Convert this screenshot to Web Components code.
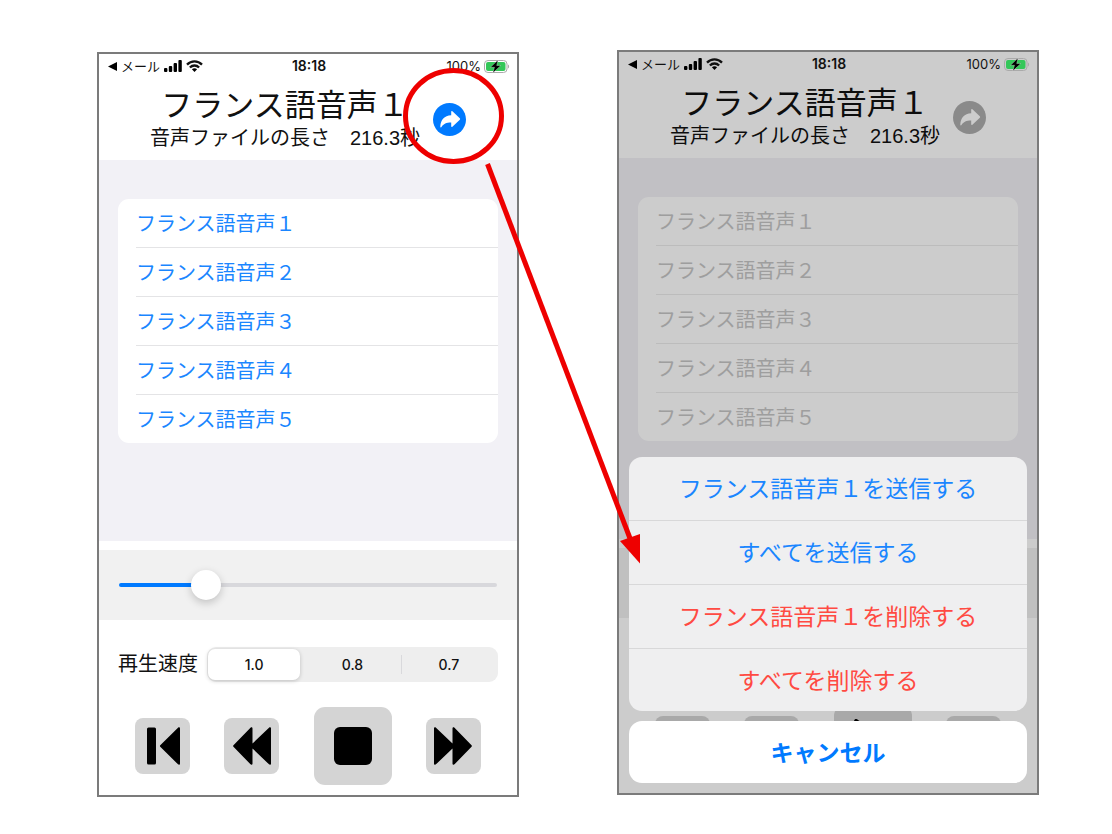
<!DOCTYPE html>
<html lang="ja">
<head>
<meta charset="utf-8">
<meta name="viewport" content="width=device-width, initial-scale=1">
<title>フランス語音声</title>
<style>
  body { margin: 0; background: #fff; font-family: Inter, "Noto Sans CJK JP", sans-serif; color: #111; }
</style>
</head>
<body>
<guide-figure>
  <phone-frame slot="before">
    <status-bar slot="status"></status-bar>
    <player-header></player-header>
    <track-list></track-list>
    <seek-bar></seek-bar>
    <speed-picker></speed-picker>
    <transport-controls></transport-controls>
  </phone-frame>
  <phone-frame slot="after" dimmed>
    <status-bar slot="status"></status-bar>
    <player-header></player-header>
    <track-list></track-list>
    <seek-bar></seek-bar>
    <speed-picker covered></speed-picker>
    <transport-controls paused></transport-controls>
    <action-sheet slot="sheet">
      <sheet-action>フランス語音声１を送信する</sheet-action>
      <sheet-action>すべてを送信する</sheet-action>
      <sheet-action kind="danger">フランス語音声１を削除する</sheet-action>
      <sheet-action kind="danger" last>すべてを削除する</sheet-action>
      <sheet-action slot="cancel" kind="cancel" last>キャンセル</sheet-action>
    </action-sheet>
  </phone-frame>
</guide-figure>

<script>
const define = (name, html) => customElements.define(name, class extends HTMLElement {
  constructor() {
    super();
    const t = document.createElement('template');
    t.innerHTML = '<style>*{box-sizing:border-box}button{font:inherit;color:inherit;border:0;background:none;padding:0;margin:0}svg{display:block}</style>' +
      (typeof html === 'function' ? html(this) : html);
    this.attachShadow({ mode: 'open' }).append(t.content.cloneNode(true));
  }
});

define('guide-figure', `
<style>
  :host { display: block; position: relative; }
  .pair { display: grid; grid-template-columns: 1fr 1fr; gap: 98px; padding: 50px 73px 37px 97px; align-items: start; }
  .first { padding-top: 2px; }
  .marks { position: absolute; z-index: 5; inset: 0; width: 100%; pointer-events: none; }
</style>
<div class="pair"><div class="first"><slot name="before"></slot></div><slot name="after"></slot></div>
<svg class="marks" viewBox="0 0 1112 834" aria-hidden="true">
  <ellipse cx="453.5" cy="116" rx="48" ry="45.5" fill="none" stroke="#ee0000" stroke-width="5"/>
  <path d="M487.5 164 631 541" stroke="#ee0000" stroke-width="5" fill="none"/>
  <path d="M640 563.5 620 541 640 534Z" fill="#ee0000"/>
</svg>`);

define('phone-frame', `
<style>
  :host { display: block; position: relative; border: 2px solid #7b7b7b; background: #fff;
    --accent: #007aff; --track-text: #1a86ff; --rule: #e4e4e6; }
  :host([dimmed]) { --accent: #adadad; --track-text: #c6c6c6; --rule: #ececec; }
  .status { position: relative; z-index: 2; }
  .shade { display: none; position: absolute; inset: 0; background: rgba(0,0,0,.2); }
  :host([dimmed]) .shade { display: block; }
</style>
<div class="status"><slot name="status"></slot></div>
<slot></slot>
<div class="shade"></div>
<slot name="sheet"></slot>`);

define('status-bar', `
<style>
  :host { display: grid; grid-template-columns: 1fr auto 1fr; align-items: center; height: 24px; padding: 0 7px 0 9px; font-size: 13px; line-height: 20px; }
  .left, .right { display: flex; align-items: center; }
  .left { gap: 4px; }
  .right { justify-content: flex-end; gap: 3px; }
  button { display: flex; align-items: center; gap: 4px; }
  time { font-size: 14px; font-weight: 600; }
</style>
<div class="left">
  <button type="button"><svg width="9" height="9" viewBox="0 0 9 9" aria-hidden="true"><path d="M0 4.5 9 0V9Z"/></svg>メール</button>
  <svg width="18" height="12" viewBox="0 0 18 12" aria-hidden="true"><rect y="8" width="3.4" height="4" rx="1"/><rect x="4.8" y="6" width="3.4" height="6" rx="1"/><rect x="9.6" y="3" width="3.4" height="9" rx="1"/><rect x="14.4" width="3.4" height="12" rx="1"/></svg>
  <svg width="17" height="12" viewBox="0 0 17 12" aria-hidden="true"><g fill="none" stroke="#111" stroke-width="2.3"><path d="M1 4.6C5.2.3 11.8.3 16 4.6"/><path d="M3.9 7.5c2.6-2.7 6.6-2.7 9.2 0"/></g><path d="M8.5 12 5.9 9.3c1.5-1.4 3.7-1.4 5.2 0Z"/></svg>
</div>
<time>18:18</time>
<div class="right">
  <span>100%</span>
  <svg width="26" height="13" viewBox="0 0 26 13" aria-hidden="true"><rect x=".5" y=".5" width="22.5" height="12" rx="3.5" fill="none" stroke="#aaa"/><rect x="2" y="2" width="19.5" height="9" rx="2" fill="#34c759"/><path d="M24 4.5c1.5.5 1.5 3.5 0 4Z" fill="#aaa"/><path d="M14 0 6.500 7.300h4L8.800 13 16.800 5.500h-4.100Z" stroke="#fff" stroke-opacity=".5" stroke-width=".6"/></svg>
</div>`);

define('player-header', `
<style>
  :host { display: flex; justify-content: center; align-items: center; gap: 13px; padding: 8px 8px 7px; }
  .text { text-align: center; white-space: nowrap; }
  h1 { margin: 0; font-size: 31px; line-height: 38px; font-weight: 400; }
  p { margin: 0; font-family: "Liberation Sans", "Noto Sans CJK JP", sans-serif; font-size: 20px; line-height: 29px; }
  button { width: 33px; height: 33px; }
</style>
<div class="text"><h1>フランス語音声１</h1><p>音声ファイルの長さ　216.3秒</p></div>
<button type="button" aria-label="共有"><svg width="33" height="33" viewBox="0 0 33 33"><circle cx="16.5" cy="16.5" r="16.5" style="fill:var(--accent)"/><path d="M18.2 8.7c0-.8.6-1 1.2-.5l7.4 7c.5.5.5 1 0 1.5l-7.4 7c-.6.5-1.200.2-1.200-.5v-3.600c-5 0-7.600 1.300-9.700 4.400-.5.7-1.300.4-1.200-.5.5-6.600 3.900-10.900 10.900-11.200Z" fill="#fff"/></svg></button>`);

define('track-list', `
<style>
  :host { display: block; background: #f2f1f6; padding: 39px 19px 98px; }
  ul { list-style: none; margin: 0; padding: 0 0 0 18px; background: #fff; border-radius: 11px; }
  li { border-bottom: 1px solid var(--rule); }
  li:last-child { border: 0; }
  button { display: block; width: 100%; height: 48px; padding-top: 2px; text-align: left; font-size: 20px; line-height: 46px; color: var(--track-text); font-weight: 400; }
</style>
<ul>${['１','２','３','４','５'].map(n => `<li><button type="button">フランス語音声${n}</button></li>`).join('')}</ul>`);

define('seek-bar', `
<style>
  :host { display: flex; align-items: center; height: 70px; margin-top: 9px; padding: 0 20px; background: #f1f1f1; }
  input { appearance: none; width: 100%; height: 30px; margin: 0; background: none; }
  input::-webkit-slider-runnable-track { height: 4px; border-radius: 2px; background: linear-gradient(to right, #007aff 23%, #d8d8dc 23%); }
  input::-webkit-slider-thumb { appearance: none; width: 30px; height: 30px; margin-top: -13px; border-radius: 50%; background: #fff; box-shadow: 0 3px 9px rgba(0,0,0,.2); }
</style>
<input type="range" min="0" max="216" value="45" aria-label="再生位置">`);

define('speed-picker', `
<style>
  :host { display: flex; align-items: center; gap: 9px; padding: 27px 19px 0; }
  :host([covered]) { visibility: hidden; }
  #name { font-size: 20px; line-height: 35px; white-space: nowrap; height: 35px; }
  .seg { flex: 1; display: grid; grid-template-columns: repeat(3, 1fr); height: 35px; padding: 2px 1px; background: #eeeeee; border-radius: 9px; }
  label { position: relative; display: flex; align-items: center; justify-content: center; font-size: 14px; font-weight: 500; border-radius: 7px; }
  label:nth-child(1) { background: #fff; box-shadow: 0 1px 4px rgba(0,0,0,.2); margin-right: 4px; }
  label:nth-child(3)::before { content: ""; position: absolute; left: 0; top: 6px; bottom: 6px; width: 1px; background: #d9d9dc; }
  input { appearance: none; position: absolute; inset: 0; margin: 0; }
</style>
<span id="name">再生速度</span>
<div class="seg" role="radiogroup" aria-labelledby="name">
  <label><input type="radio" name="speed" checked>1.0</label>
  <label><input type="radio" name="speed">0.8</label>
  <label><input type="radio" name="speed">0.7</label>
</div>`);

define('transport-controls', el => `
<style>
  :host { display: flex; align-items: center; justify-content: space-between; padding: 25px 36px 10px; }
  button { width: 55px; height: 56px; border-radius: 8px; background: #d4d4d4; display: grid; place-items: center; }
  .main { width: 78px; height: 78px; border-radius: 11px; }
</style>
<button type="button" aria-label="先頭へ"><svg width="34" height="38" viewBox="0 0 34 38"><rect x="1" y=".5" width="9" height="37" rx="1.500"/><path d="M32 .7c1-.9 2-.3 2 .8v35c0 1.100-1 1.700-2 .8L14.500 20c-.8-.7-.8-1.300 0-2Z"/></svg></button>
<button type="button" aria-label="巻き戻し"><svg width="38" height="38" viewBox="0 0 38 38"><path d="M17.500.7c1-.9 2-.3 2 .8v15L36 .7c1-.9 2-.3 2 .8v35c0 1.100-1 1.700-2 .8L19.500 21.500v15c0 1.100-1 1.700-2 .8L.700 20c-.8-.7-.8-1.300 0-2Z"/></svg></button>
<button type="button" class="main" aria-label="再生・停止">${el.hasAttribute('paused')
  ? '<svg width="38" height="50" viewBox="0 0 38 50"><path d="M0 3c0-3 2-4 4-2l33 22q2 2 0 4L4 49c-2 2-4 1-4-2Z"/></svg>'
  : '<svg width="38" height="38" viewBox="0 0 38 38"><rect width="38" height="38" rx="6"/></svg>'}</button>
<button type="button" aria-label="早送り"><svg width="38" height="38" viewBox="0 0 38 38"><path transform="matrix(-1 0 0 1 38 0)" d="M17.500.7c1-.9 2-.3 2 .8v15L36 .7c1-.9 2-.3 2 .8v35c0 1.100-1 1.700-2 .8L19.500 21.500v15c0 1.100-1 1.700-2 .8L.700 20c-.8-.7-.8-1.300 0-2Z"/></svg></button>`);

define('action-sheet', `
<style>
  :host { position: absolute; z-index: 3; left: 10px; right: 10px; bottom: 10px; display: flex; flex-direction: column; gap: 10px; }
  .group { overflow: hidden; border-radius: 13px; background: #efeff0; }
  .cancel { background: #fff; }
</style>
<div class="group" role="menu"><slot></slot></div>
<div class="group cancel"><slot name="cancel"></slot></div>`);

define('sheet-action', `
<style>
  :host { display: block; color: #1a86ff; border-bottom: 1px solid #d8d8d9; }
  :host([kind=danger]) { color: #ff4a42; }
  :host([kind=cancel]) { color: #007aff; font-weight: 700; }
  :host([last]) { border: 0; }
  button { display: block; width: 100%; height: 63px; padding-top: 2px; font-size: 23px; line-height: 61px; white-space: nowrap; }
  :host([last]) button { height: 62px; }
</style>
<button type="button"><slot></slot></button>`);
</script>
</body>
</html>
